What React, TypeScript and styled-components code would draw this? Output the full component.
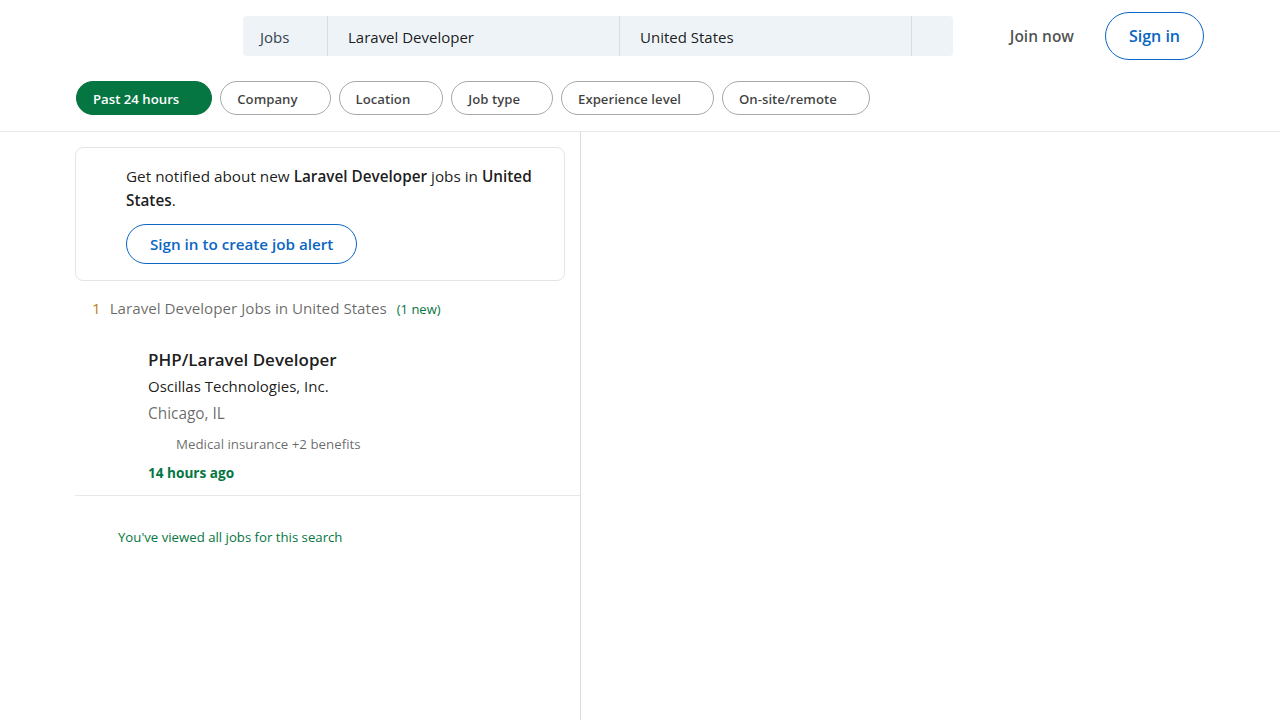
import React from "react";
import styled, { createGlobalStyle } from "styled-components";

const GlobalStyle = createGlobalStyle`
  * { box-sizing: border-box; }
  html, body { margin: 0; padding: 0; background: #ffffff; }
  body {
    font-family: "Open Sans", "Noto Sans", "Liberation Sans", sans-serif;
    color: rgba(0, 0, 0, 0.9);
  }
`;

const Page = styled.div`
  min-height: 100vh;
  display: flex;
  flex-direction: column;
`;

const Header = styled.header`
  border-bottom: 1px solid #e8e8e8;
`;

const HeaderInner = styled.div`
  width: 1128px;
  margin: 0 auto;
`;

const TopRow = styled.div`
  display: flex;
  align-items: center;
  height: 72px;
  padding-left: 167px;
`;

const SearchBar = styled.div`
  display: flex;
  width: 710px;
  height: 40px;
  background: #eef3f8;
  border-radius: 4px;
`;

const SearchSegment = styled.div<{ $w: number; $pl: number; $muted?: boolean }>`
  width: ${(p) => p.$w}px;
  display: flex;
  align-items: center;
  padding-top: 2px;
  padding-left: ${(p) => p.$pl}px;
  font-size: 15px;
  color: ${(p) => (p.$muted ? "#38434f" : "rgba(0,0,0,0.9)")};
  border-right: 1px solid #d9dee3;
  &:last-child { border-right: none; }
`;

const Actions = styled.div`
  margin-left: auto;
  display: flex;
  align-items: center;
`;

const JoinLink = styled.a`
  font-size: 15.5px;
  font-weight: 600;
  color: rgba(0, 0, 0, 0.7);
  padding: 0 31px 0 0;
  text-decoration: none;
`;

const SignIn = styled.button`
  height: 48px;
  width: 99px;
  padding: 0;
  border: 1px solid #0a66c2;
  border-radius: 24px;
  background: #fff;
  color: #0a66c2;
  font-family: inherit;
  font-size: 16px;
  font-weight: 600;
`;

const FilterRow = styled.div`
  display: flex;
  gap: 8px;
  padding: 9px 0 16px;
`;

const Pill = styled.button<{ $active?: boolean }>`
  height: 34px;
  padding: 1px 32px 0 16px;
  border-radius: 17px;
  font-family: inherit;
  font-size: 13.2px;
  font-weight: 600;
  border: 1px solid ${(p) => (p.$active ? "#057642" : "#a8a8a8")};
  background: ${(p) => (p.$active ? "#057642" : "#fff")};
  color: ${(p) => (p.$active ? "#fff" : "rgba(0,0,0,0.75)")};
  white-space: nowrap;
`;

const Main = styled.main`
  flex: 1;
  width: 1130px;
  margin: 0 auto;
  display: flex;
`;

const LeftColumn = styled.section`
  width: 506px;
  border-right: 1px solid #dcdcdc;
  padding-top: 15px;
`;

const AlertCard = styled.div`
  width: 490px;
  border: 1px solid #e4e4e4;
  border-radius: 8px;
  padding: 16px 16px 16px 50px;
`;

const AlertText = styled.p`
  margin: 0;
  font-size: 15.3px;
  line-height: 24px;
  color: rgba(0, 0, 0, 0.9);
  b { font-weight: 600; }
`;

const AlertButton = styled.button`
  margin-top: 12px;
  height: 40px;
  padding: 0 23px;
  border: 1px solid #0a66c2;
  border-radius: 20px;
  background: #fff;
  color: #0a66c2;
  font-family: inherit;
  font-size: 15.2px;
  font-weight: 600;
`;

const ResultsHeading = styled.h1`
  margin: 15px 0 0;
  padding-left: 17px;
  font-size: 15.2px;
  font-weight: 400;
  line-height: 24px;
  color: rgba(0, 0, 0, 0.6);
  display: flex;
  align-items: baseline;
`;

const Count = styled.span`
  margin-right: 9px;
  color: #c37d16;
`;

const NewCount = styled.span`
  margin-left: 10px;
  font-size: 13px;
  color: #057642;
`;

const JobCard = styled.div`
  margin-top: 15px;
  padding: 12px 16px 12px 73px;
  border-bottom: 1px solid #e8e8e8;
`;

const JobTitle = styled.h3`
  margin: 0;
  font-size: 17px;
  font-weight: 600;
  line-height: 24px;
  color: rgba(0, 0, 0, 0.9);
`;

const Company = styled.h4`
  margin: 2px 0 0;
  font-size: 15px;
  font-weight: 400;
  line-height: 24px;
  color: rgba(0, 0, 0, 0.9);
`;

const Location = styled.div`
  margin-top: 4px;
  font-size: 15.4px;
  line-height: 24px;
  color: rgba(0, 0, 0, 0.6);
`;

const Benefits = styled.div`
  margin-top: 8px;
  padding-left: 28px;
  font-size: 13.3px;
  line-height: 20px;
  color: rgba(0, 0, 0, 0.6);
`;

const Posted = styled.time`
  display: block;
  margin-top: 9px;
  font-size: 13.6px;
  font-weight: 700;
  line-height: 20px;
  color: #057642;
`;

const EndNote = styled.p`
  margin: 31px 0 0;
  padding-left: 43px;
  font-size: 13.2px;
  line-height: 20px;
  color: #057642;
`;

const filters = ["Company", "Location", "Job type", "Experience level", "On-site/remote"];

export default function App() {
  return (
    <Page>
      <GlobalStyle />
      <Header>
        <HeaderInner>
          <TopRow>
            <SearchBar>
              <SearchSegment $w={85} $pl={17} $muted>Jobs</SearchSegment>
              <SearchSegment $w={292} $pl={20}>Laravel Developer</SearchSegment>
              <SearchSegment $w={292} $pl={20}>United States</SearchSegment>
              <SearchSegment $w={41} $pl={0} />
            </SearchBar>
            <Actions>
              <JoinLink href="#">Join now</JoinLink>
              <SignIn>Sign in</SignIn>
            </Actions>
          </TopRow>
          <FilterRow>
            <Pill $active>Past 24 hours</Pill>
            {filters.map((f) => (
              <Pill key={f}>{f}</Pill>
            ))}
          </FilterRow>
        </HeaderInner>
      </Header>
      <Main>
        <LeftColumn>
          <AlertCard>
            <AlertText>
              Get notified about new <b>Laravel Developer</b> jobs in <b>United States</b>.
            </AlertText>
            <AlertButton>Sign in to create job alert</AlertButton>
          </AlertCard>
          <ResultsHeading>
            <Count>1</Count>
            Laravel Developer Jobs in United States
            <NewCount>(1 new)</NewCount>
          </ResultsHeading>
          <JobCard>
            <JobTitle>PHP/Laravel Developer</JobTitle>
            <Company>Oscillas Technologies, Inc.</Company>
            <Location>Chicago, IL</Location>
            <Benefits>Medical insurance +2 benefits</Benefits>
            <Posted>14 hours ago</Posted>
          </JobCard>
          <EndNote>You've viewed all jobs for this search</EndNote>
        </LeftColumn>
      </Main>
    </Page>
  );
}
